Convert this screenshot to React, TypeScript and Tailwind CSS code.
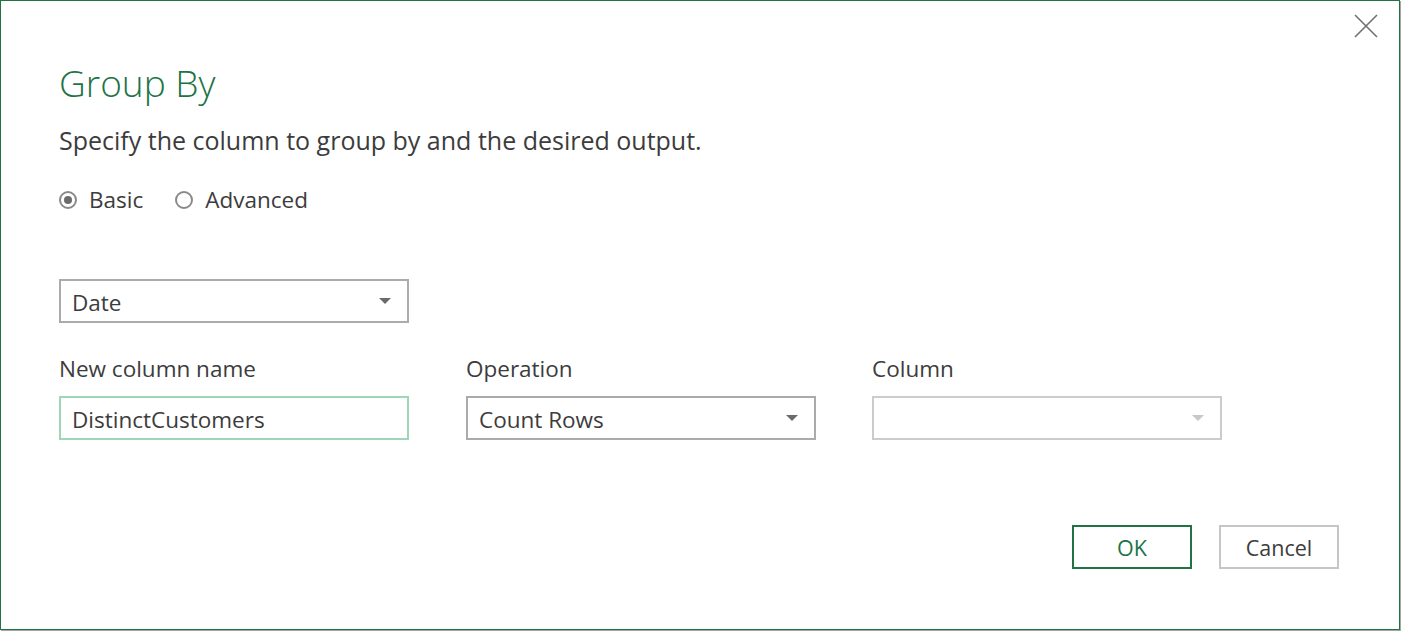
import React, { useState } from 'react';

function Caret({ color = '#6b6b6b' }: { color?: string }) {
  return (
    <svg width="12" height="6" viewBox="0 0 12 6" className="shrink-0">
      <path d="M0 0 L12 0 L6 6 Z" fill={color} />
    </svg>
  );
}

function Select({ value, disabled }: { value: string; disabled?: boolean }) {
  return (
    <div
      className={
        'flex h-[44px] w-[350px] items-center justify-between border-2 bg-white pl-[11px] pr-[16px] ' +
        (disabled ? 'border-[#cccccc]' : 'border-[#ababab]')
      }
    >
      <span className="pt-[3px] text-[22.5px] leading-[30px] text-[#3c3c3c]">{value}</span>
      <Caret color={disabled ? '#c8c8c8' : '#6b6b6b'} />
    </div>
  );
}

export default function App() {
  const [mode, setMode] = useState<'basic' | 'advanced'>('basic');

  return (
    <div className="h-[631px] w-[1401px] bg-white" style={{ fontFamily: '"Open Sans", "Noto Sans", sans-serif' }}>
      <div className="relative h-[630px] w-[1400px] border border-[#217346] bg-white pl-[58px] pt-[58px] shadow-[1px_1px_0_#a6a6a6]">
        {/* close */}
        <button className="absolute right-[21px] top-[13px]">
          <svg width="24" height="24" viewBox="0 0 24 24">
            <path d="M1 1 L23 23 M23 1 L1 23" stroke="#707070" strokeWidth="1.6" />
          </svg>
        </button>

        <h1 className="text-[37px] font-light leading-[48px] text-[#217346]">Group By</h1>
        <p className="mt-[18px] text-[25px] leading-[30px] text-[#3c3c3c]">
          Specify the column to group by and the desired output.
        </p>

        <div className="mt-[30px] flex items-center gap-[32px] text-[22.5px] leading-[30px] text-[#3c3c3c]">
          <label className="flex items-center gap-[12px]" onClick={() => setMode('basic')}>
            <span className="flex h-[18px] w-[18px] items-center justify-center rounded-full border-2 border-[#8a8a8a]">
              {mode === 'basic' && <span className="h-[8px] w-[8px] rounded-full bg-[#6b6b6b]" />}
            </span>
            Basic
          </label>
          <label className="flex items-center gap-[12px]" onClick={() => setMode('advanced')}>
            <span className="flex h-[18px] w-[18px] items-center justify-center rounded-full border-2 border-[#8a8a8a]">
              {mode === 'advanced' && <span className="h-[8px] w-[8px] rounded-full bg-[#6b6b6b]" />}
            </span>
            Advanced
          </label>
        </div>

        <div className="mt-[64px]">
          <Select value="Date" />
        </div>

        <div className="mt-[31px] flex">
          <div className="flex flex-col">
            <span className="mb-[12px] text-[22.5px] leading-[30px] text-[#3c3c3c]">New column name</span>
            <div className="flex h-[44px] w-[350px] items-center border-2 border-[#9fd6b8] pl-[11px]">
              <span className="pt-[3px] text-[22.5px] leading-[30px] text-[#3c3c3c]">DistinctCustomers</span>
            </div>
          </div>
          <div className="ml-[57px] flex flex-col">
            <span className="mb-[12px] text-[22.5px] leading-[30px] text-[#3c3c3c]">Operation</span>
            <Select value="Count Rows" />
          </div>
          <div className="ml-[56px] flex flex-col">
            <span className="mb-[12px] text-[22.5px] leading-[30px] text-[#3c3c3c]">Column</span>
            <Select value="" disabled />
          </div>
        </div>

        <div className="mr-[60px] mt-[85px] flex justify-end gap-[27px]">
          <button className="h-[44px] w-[120px] border-2 border-[#217346] pt-[3px] text-[21.5px] text-[#217346]">OK</button>
          <button className="h-[44px] w-[120px] border-2 border-[#c6c6c6] pt-[3px] text-[21.5px] text-[#3c3c3c]">Cancel</button>
        </div>
      </div>
    </div>
  );
}
